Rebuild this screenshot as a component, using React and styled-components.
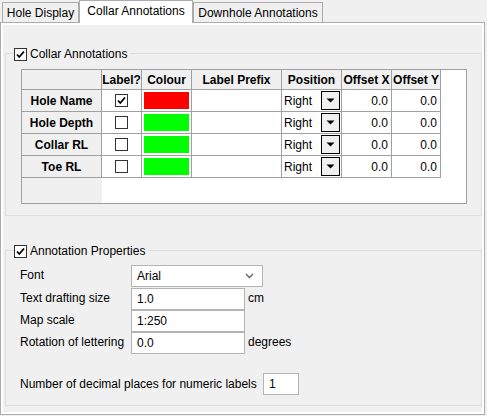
import React from 'react';
import styled, { createGlobalStyle } from 'styled-components';

const GlobalStyle = createGlobalStyle`
    html, body {
        margin: 0;
        padding: 0;
        background: #f0f0f0;
    }
    body {
        font-family: "Liberation Sans", Arial, sans-serif;
        font-size: 12px;
        color: #000;
    }
`;

const rows = [
    { name: 'Hole Name', checked: true, colour: '#ff0000' },
    { name: 'Hole Depth', checked: false, colour: '#00ff00' },
    { name: 'Collar RL', checked: false, colour: '#00ff00' },
    { name: 'Toe RL', checked: false, colour: '#00ff00' },
];

const tabs = [
    { label: 'Hole Display', width: 77 },
    { label: 'Collar Annotations', width: 114, active: true },
    { label: 'Downhole Annotations', width: 130 },
];

function Check({ checked }) {
    return (
        <CheckBox>
            {checked && (
                <svg width="11" height="11" viewBox="0 0 11 11">
                    <path d="M2 5.5 L4.3 8 L9 2.5" fill="none" stroke="#000" strokeWidth="1.8" />
                </svg>
            )}
        </CheckBox>
    );
}

function App() {
    return (
        <>
            <GlobalStyle />
            <Window>
                <TabStrip>
                    {tabs.map(t => (
                        <Tab key={t.label} $active={t.active} $width={t.width}>{t.label}</Tab>
                    ))}
                </TabStrip>
                <Page>
                    <GroupBox $height={163}>
                        <GroupTitle>
                            <Check checked />
                            <span>Collar Annotations</span>
                        </GroupTitle>
                        <Grid>
                            <Table>
                                <HeadCell />
                                <HeadCell>Label?</HeadCell>
                                <HeadCell>Colour</HeadCell>
                                <HeadCell>Label Prefix</HeadCell>
                                <HeadCell>Position</HeadCell>
                                <HeadCell>Offset X</HeadCell>
                                <HeadCell>Offset Y</HeadCell>
                                {rows.map(r => (
                                    <React.Fragment key={r.name}>
                                        <RowHead>{r.name}</RowHead>
                                        <Cell $center><Check checked={r.checked} /></Cell>
                                        <Cell><Swatch $colour={r.colour} /></Cell>
                                        <Cell />
                                        <Cell>
                                            <PosText>Right</PosText>
                                            <DropButton>
                                                <svg width="9" height="5" viewBox="0 0 9 5">
                                                    <path d="M0.5 0.5 H8.5 L4.5 4.5 Z" fill="#000" />
                                                </svg>
                                            </DropButton>
                                        </Cell>
                                        <Cell $right>0.0</Cell>
                                        <Cell $right>0.0</Cell>
                                    </React.Fragment>
                                ))}
                            </Table>
                        </Grid>
                    </GroupBox>

                    <GroupBox $height={156} $top={34}>
                        <GroupTitle>
                            <Check checked />
                            <span>Annotation Properties</span>
                        </GroupTitle>
                        <Form>
                            <FieldLabel>Font</FieldLabel>
                            <Combo>
                                <span>Arial</span>
                                <svg width="9" height="6" viewBox="0 0 9 6">
                                    <path d="M1 1 L4.5 4.5 L8 1" fill="none" stroke="#606060" strokeWidth="1.3" />
                                </svg>
                            </Combo>

                            <FieldLabel>Text drafting size</FieldLabel>
                            <TextBox>1.0</TextBox>
                            <Unit>cm</Unit>

                            <FieldLabel>Map scale</FieldLabel>
                            <TextBox>1:250</TextBox>
                            <Unit />

                            <FieldLabel>Rotation of lettering</FieldLabel>
                            <TextBox>0.0</TextBox>
                            <Unit>degrees</Unit>
                        </Form>
                        <DecimalRow>
                            <DecimalLabel>Number of decimal places for numeric labels</DecimalLabel>
                            <TextBox $width={36}>1</TextBox>
                        </DecimalRow>
                    </GroupBox>
                </Page>
            </Window>
        </>
    );
}

const Window = styled.div`
    width: 487px;
    height: 416px;
    background: #f0f0f0;
    overflow: hidden;
`;

const TabStrip = styled.div`
    display: flex;
    align-items: flex-end;
    height: 22px;
    padding-left: 2px;
`;

const Tab = styled.div`
    box-sizing: border-box;
    width: ${p => p.$width}px;
    height: ${p => p.$active ? 23 : 20}px;
    margin-bottom: ${p => p.$active ? -1 : 0}px;
    position: relative;
    z-index: ${p => p.$active ? 1 : 0};
    display: flex;
    align-items: center;
    justify-content: center;
    padding-bottom: ${p => p.$active ? 3 : 0}px;
    background: ${p => p.$active ? '#fff' : '#f0f0f0'};
    border: 1px solid #acacac;
    border-bottom: none;
    white-space: nowrap;
`;

const Page = styled.div`
    box-sizing: border-box;
    width: 485px;
    height: 393px;
    border: 1px solid #acacac;
    box-shadow: inset 0 0 0 2px #fff;
    padding: 30px 2px 0 4px;
`;

const GroupBox = styled.div`
    box-sizing: border-box;
    position: relative;
    height: ${p => p.$height}px;
    margin-top: ${p => p.$top || 0}px;
    border: 1px solid #dcdcdc;
`;

const GroupTitle = styled.div`
    position: absolute;
    top: -8px;
    left: 8px;
    height: 16px;
    display: flex;
    align-items: center;
    gap: 3px;
    padding-right: 3px;
    background: #f0f0f0;
    white-space: nowrap;
`;

const CheckBox = styled.span`
    box-sizing: border-box;
    width: 13px;
    height: 13px;
    display: inline-flex;
    align-items: center;
    justify-content: center;
    border: 1px solid #333;
    background: #fff;
`;

const Grid = styled.div`
    box-sizing: border-box;
    width: 446px;
    height: 135px;
    margin: 15px 0 0 15px;
    border: 1px solid #a0a0a0;
    background: linear-gradient(to right, #f0f0f0 80px, #fff 80px);
`;

const Table = styled.div`
    display: grid;
    grid-template-columns: 80px 40px 50px 90px 60px 50px 49px;
    grid-template-rows: 20px repeat(4, 22px);
`;

const Cell = styled.div`
    box-sizing: border-box;
    display: flex;
    align-items: center;
    justify-content: ${p => p.$center ? 'center' : p.$right ? 'flex-end' : 'flex-start'};
    padding: ${p => p.$right ? '0 3px 0 0' : '0'};
    border-right: 1px solid #a0a0a0;
    border-bottom: 1px solid #a0a0a0;
    background: #fff;
    white-space: nowrap;
`;

const HeadCell = styled(Cell)`
    justify-content: center;
    background: #f0f0f0;
    font-weight: bold;
    overflow: hidden;
`;

const RowHead = styled(HeadCell)`
    font-weight: bold;
`;

const Swatch = styled.div`
    width: 45px;
    height: 17px;
    margin-left: 2px;
    background: ${p => p.$colour};
`;

const PosText = styled.span`
    flex: 1;
    padding-left: 2px;
`;

const DropButton = styled.div`
    box-sizing: border-box;
    width: 19px;
    height: 19px;
    margin-right: 1px;
    display: flex;
    align-items: center;
    justify-content: center;
    border: 1px solid #000;
    background: #f0f0f0;
`;

const Form = styled.div`
    display: grid;
    grid-template-columns: 111px 114px 1fr;
    grid-template-rows: 23px 22px 22px 22px;
    align-items: start;
    padding: 14px 0 0 14px;
`;

const FieldLabel = styled.div`
    height: 22px;
    line-height: 21px;
    white-space: nowrap;
`;

const TextBox = styled.div`
    box-sizing: border-box;
    width: ${p => p.$width || 114}px;
    height: 22px;
    padding: 0 5px;
    line-height: 20px;
    border: 1px solid #b4b4b4;
    background: #fff;
`;

const Combo = styled(TextBox)`
    grid-column: span 2;
    width: 132px;
    display: flex;
    align-items: center;
    justify-content: space-between;
    padding: 0 8px 0 5px;
`;

const Unit = styled.div`
    height: 22px;
    line-height: 21px;
    padding-left: 3px;
`;

const DecimalRow = styled.div`
    display: flex;
    align-items: center;
    margin-top: 19px;
    padding-left: 14px;
`;

const DecimalLabel = styled.div`
    width: 243px;
    white-space: nowrap;
`;

export default App;
